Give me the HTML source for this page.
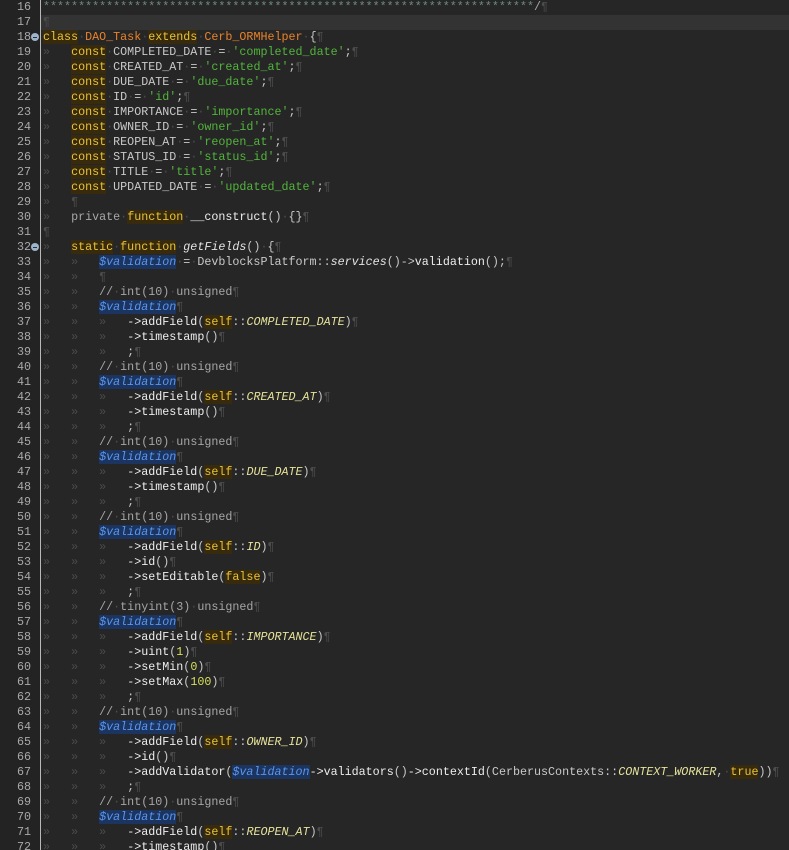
<!DOCTYPE html>
<html><head><meta charset="utf-8">
<style>
html,body{margin:0;padding:0;background:#262626;width:789px;height:850px;overflow:hidden}
.ed{position:relative;width:789px;height:850px;font-family:"Liberation Mono","DejaVu Sans Mono",monospace;font-size:11.7px;color:#c9c9c9}
.gut{position:absolute;left:0;top:0;width:40px;height:850px;background:#232323;border-right:1px solid #b8b8b8}
.ln{height:15px;line-height:15px;text-align:right;width:31px;color:#a9a9a9;position:relative}
.fold{position:absolute;left:31px;top:3px;width:8px;height:8px;border-radius:50%;background:#9fb4c8}
.fold:after{content:"";position:absolute;left:2px;top:3.5px;width:4px;height:1px;background:#234}
.code{position:absolute;left:41px;top:0;right:0}
.l{height:15px;line-height:15px;white-space:pre;padding-left:2px}
.cur{background:#333}
.m{color:#4c4c4c}
.k{color:#e8c23a;background:#382a0c}
.o{color:#e8832a}
.s{color:#52b43c}
.v{color:#5b95ec;font-style:italic;background:#1b3560}
.i{color:#e6e29a;font-style:italic}
.n{color:#d8df5a}
.g{color:#a6a6a6}
.w{color:#ededed}
em{font-style:italic;color:#e4e4e4}
.st{color:#6d8b7e}
</style></head><body><div class="ed">
<div class="gut">
<div class="ln">16</div><div class="ln">17</div><div class="ln">18<span class="fold"></span></div><div class="ln">19</div><div class="ln">20</div><div class="ln">21</div><div class="ln">22</div><div class="ln">23</div><div class="ln">24</div><div class="ln">25</div><div class="ln">26</div><div class="ln">27</div><div class="ln">28</div><div class="ln">29</div><div class="ln">30</div><div class="ln">31</div><div class="ln">32<span class="fold"></span></div><div class="ln">33</div><div class="ln">34</div><div class="ln">35</div><div class="ln">36</div><div class="ln">37</div><div class="ln">38</div><div class="ln">39</div><div class="ln">40</div><div class="ln">41</div><div class="ln">42</div><div class="ln">43</div><div class="ln">44</div><div class="ln">45</div><div class="ln">46</div><div class="ln">47</div><div class="ln">48</div><div class="ln">49</div><div class="ln">50</div><div class="ln">51</div><div class="ln">52</div><div class="ln">53</div><div class="ln">54</div><div class="ln">55</div><div class="ln">56</div><div class="ln">57</div><div class="ln">58</div><div class="ln">59</div><div class="ln">60</div><div class="ln">61</div><div class="ln">62</div><div class="ln">63</div><div class="ln">64</div><div class="ln">65</div><div class="ln">66</div><div class="ln">67</div><div class="ln">68</div><div class="ln">69</div><div class="ln">70</div><div class="ln">71</div><div class="ln">72</div>
</div>
<div class="code">
<div class="l"><span class="st">**********************************************************************</span><span class="g">/</span><span class="m">¶</span></div>
<div class="l cur"><span class="m">¶</span></div>
<div class="l"><span class="k">class</span><span class="m">·</span><span class="o">DAO_Task</span><span class="m">·</span><span class="k">extends</span><span class="m">·</span><span class="o">Cerb_ORMHelper</span><span class="m">·</span>{<span class="m">¶</span></div>
<div class="l"><span class="m">»</span>   <span class="k">const</span><span class="m">·</span>COMPLETED_DATE<span class="m">·</span>=<span class="m">·</span><span class="s">'completed_date'</span>;<span class="m">¶</span></div>
<div class="l"><span class="m">»</span>   <span class="k">const</span><span class="m">·</span>CREATED_AT<span class="m">·</span>=<span class="m">·</span><span class="s">'created_at'</span>;<span class="m">¶</span></div>
<div class="l"><span class="m">»</span>   <span class="k">const</span><span class="m">·</span>DUE_DATE<span class="m">·</span>=<span class="m">·</span><span class="s">'due_date'</span>;<span class="m">¶</span></div>
<div class="l"><span class="m">»</span>   <span class="k">const</span><span class="m">·</span>ID<span class="m">·</span>=<span class="m">·</span><span class="s">'id'</span>;<span class="m">¶</span></div>
<div class="l"><span class="m">»</span>   <span class="k">const</span><span class="m">·</span>IMPORTANCE<span class="m">·</span>=<span class="m">·</span><span class="s">'importance'</span>;<span class="m">¶</span></div>
<div class="l"><span class="m">»</span>   <span class="k">const</span><span class="m">·</span>OWNER_ID<span class="m">·</span>=<span class="m">·</span><span class="s">'owner_id'</span>;<span class="m">¶</span></div>
<div class="l"><span class="m">»</span>   <span class="k">const</span><span class="m">·</span>REOPEN_AT<span class="m">·</span>=<span class="m">·</span><span class="s">'reopen_at'</span>;<span class="m">¶</span></div>
<div class="l"><span class="m">»</span>   <span class="k">const</span><span class="m">·</span>STATUS_ID<span class="m">·</span>=<span class="m">·</span><span class="s">'status_id'</span>;<span class="m">¶</span></div>
<div class="l"><span class="m">»</span>   <span class="k">const</span><span class="m">·</span>TITLE<span class="m">·</span>=<span class="m">·</span><span class="s">'title'</span>;<span class="m">¶</span></div>
<div class="l"><span class="m">»</span>   <span class="k">const</span><span class="m">·</span>UPDATED_DATE<span class="m">·</span>=<span class="m">·</span><span class="s">'updated_date'</span>;<span class="m">¶</span></div>
<div class="l"><span class="m">»</span>   <span class="m">¶</span></div>
<div class="l"><span class="m">»</span>   <span class="g">private</span><span class="m">·</span><span class="k">function</span><span class="m">·</span><span class="w">__construct</span>()<span class="m">·</span>{}<span class="m">¶</span></div>
<div class="l"><span class="m">¶</span></div>
<div class="l"><span class="m">»</span>   <span class="k">static</span><span class="m">·</span><span class="k">function</span><span class="m">·</span><em>getFields</em>()<span class="m">·</span>{<span class="m">¶</span></div>
<div class="l"><span class="m">»</span>   <span class="m">»</span>   <span class="v">$validation</span><span class="m">·</span>=<span class="m">·</span>DevblocksPlatform::<em>services</em>()-&gt;<span class="w">validation</span>();<span class="m">¶</span></div>
<div class="l"><span class="m">»</span>   <span class="m">»</span>   <span class="m">¶</span></div>
<div class="l"><span class="m">»</span>   <span class="m">»</span>   <span class="g">//<span class="m">·</span>int(10)<span class="m">·</span>unsigned</span><span class="m">¶</span></div>
<div class="l"><span class="m">»</span>   <span class="m">»</span>   <span class="v">$validation</span><span class="m">¶</span></div>
<div class="l"><span class="m">»</span>   <span class="m">»</span>   <span class="m">»</span>   <span class="w">-&gt;addField</span>(<span class="k">self</span>::<span class="i">COMPLETED_DATE</span>)<span class="m">¶</span></div>
<div class="l"><span class="m">»</span>   <span class="m">»</span>   <span class="m">»</span>   <span class="w">-&gt;timestamp</span>()<span class="m">¶</span></div>
<div class="l"><span class="m">»</span>   <span class="m">»</span>   <span class="m">»</span>   ;<span class="m">¶</span></div>
<div class="l"><span class="m">»</span>   <span class="m">»</span>   <span class="g">//<span class="m">·</span>int(10)<span class="m">·</span>unsigned</span><span class="m">¶</span></div>
<div class="l"><span class="m">»</span>   <span class="m">»</span>   <span class="v">$validation</span><span class="m">¶</span></div>
<div class="l"><span class="m">»</span>   <span class="m">»</span>   <span class="m">»</span>   <span class="w">-&gt;addField</span>(<span class="k">self</span>::<span class="i">CREATED_AT</span>)<span class="m">¶</span></div>
<div class="l"><span class="m">»</span>   <span class="m">»</span>   <span class="m">»</span>   <span class="w">-&gt;timestamp</span>()<span class="m">¶</span></div>
<div class="l"><span class="m">»</span>   <span class="m">»</span>   <span class="m">»</span>   ;<span class="m">¶</span></div>
<div class="l"><span class="m">»</span>   <span class="m">»</span>   <span class="g">//<span class="m">·</span>int(10)<span class="m">·</span>unsigned</span><span class="m">¶</span></div>
<div class="l"><span class="m">»</span>   <span class="m">»</span>   <span class="v">$validation</span><span class="m">¶</span></div>
<div class="l"><span class="m">»</span>   <span class="m">»</span>   <span class="m">»</span>   <span class="w">-&gt;addField</span>(<span class="k">self</span>::<span class="i">DUE_DATE</span>)<span class="m">¶</span></div>
<div class="l"><span class="m">»</span>   <span class="m">»</span>   <span class="m">»</span>   <span class="w">-&gt;timestamp</span>()<span class="m">¶</span></div>
<div class="l"><span class="m">»</span>   <span class="m">»</span>   <span class="m">»</span>   ;<span class="m">¶</span></div>
<div class="l"><span class="m">»</span>   <span class="m">»</span>   <span class="g">//<span class="m">·</span>int(10)<span class="m">·</span>unsigned</span><span class="m">¶</span></div>
<div class="l"><span class="m">»</span>   <span class="m">»</span>   <span class="v">$validation</span><span class="m">¶</span></div>
<div class="l"><span class="m">»</span>   <span class="m">»</span>   <span class="m">»</span>   <span class="w">-&gt;addField</span>(<span class="k">self</span>::<span class="i">ID</span>)<span class="m">¶</span></div>
<div class="l"><span class="m">»</span>   <span class="m">»</span>   <span class="m">»</span>   <span class="w">-&gt;id</span>()<span class="m">¶</span></div>
<div class="l"><span class="m">»</span>   <span class="m">»</span>   <span class="m">»</span>   <span class="w">-&gt;setEditable</span>(<span class="k">false</span>)<span class="m">¶</span></div>
<div class="l"><span class="m">»</span>   <span class="m">»</span>   <span class="m">»</span>   ;<span class="m">¶</span></div>
<div class="l"><span class="m">»</span>   <span class="m">»</span>   <span class="g">//<span class="m">·</span>tinyint(3)<span class="m">·</span>unsigned</span><span class="m">¶</span></div>
<div class="l"><span class="m">»</span>   <span class="m">»</span>   <span class="v">$validation</span><span class="m">¶</span></div>
<div class="l"><span class="m">»</span>   <span class="m">»</span>   <span class="m">»</span>   <span class="w">-&gt;addField</span>(<span class="k">self</span>::<span class="i">IMPORTANCE</span>)<span class="m">¶</span></div>
<div class="l"><span class="m">»</span>   <span class="m">»</span>   <span class="m">»</span>   <span class="w">-&gt;uint</span>(<span class="n">1</span>)<span class="m">¶</span></div>
<div class="l"><span class="m">»</span>   <span class="m">»</span>   <span class="m">»</span>   <span class="w">-&gt;setMin</span>(<span class="n">0</span>)<span class="m">¶</span></div>
<div class="l"><span class="m">»</span>   <span class="m">»</span>   <span class="m">»</span>   <span class="w">-&gt;setMax</span>(<span class="n">100</span>)<span class="m">¶</span></div>
<div class="l"><span class="m">»</span>   <span class="m">»</span>   <span class="m">»</span>   ;<span class="m">¶</span></div>
<div class="l"><span class="m">»</span>   <span class="m">»</span>   <span class="g">//<span class="m">·</span>int(10)<span class="m">·</span>unsigned</span><span class="m">¶</span></div>
<div class="l"><span class="m">»</span>   <span class="m">»</span>   <span class="v">$validation</span><span class="m">¶</span></div>
<div class="l"><span class="m">»</span>   <span class="m">»</span>   <span class="m">»</span>   <span class="w">-&gt;addField</span>(<span class="k">self</span>::<span class="i">OWNER_ID</span>)<span class="m">¶</span></div>
<div class="l"><span class="m">»</span>   <span class="m">»</span>   <span class="m">»</span>   <span class="w">-&gt;id</span>()<span class="m">¶</span></div>
<div class="l"><span class="m">»</span>   <span class="m">»</span>   <span class="m">»</span>   <span class="w">-&gt;addValidator</span>(<span class="v">$validation</span><span class="w">-&gt;validators</span>()<span class="w">-&gt;contextId</span>(CerberusContexts::<span class="i">CONTEXT_WORKER</span>,<span class="m">·</span><span class="k">true</span>))<span class="m">¶</span></div>
<div class="l"><span class="m">»</span>   <span class="m">»</span>   <span class="m">»</span>   ;<span class="m">¶</span></div>
<div class="l"><span class="m">»</span>   <span class="m">»</span>   <span class="g">//<span class="m">·</span>int(10)<span class="m">·</span>unsigned</span><span class="m">¶</span></div>
<div class="l"><span class="m">»</span>   <span class="m">»</span>   <span class="v">$validation</span><span class="m">¶</span></div>
<div class="l"><span class="m">»</span>   <span class="m">»</span>   <span class="m">»</span>   <span class="w">-&gt;addField</span>(<span class="k">self</span>::<span class="i">REOPEN_AT</span>)<span class="m">¶</span></div>
<div class="l"><span class="m">»</span>   <span class="m">»</span>   <span class="m">»</span>   <span class="w">-&gt;timestamp</span>()<span class="m">¶</span></div>
</div>
</div></body></html>
